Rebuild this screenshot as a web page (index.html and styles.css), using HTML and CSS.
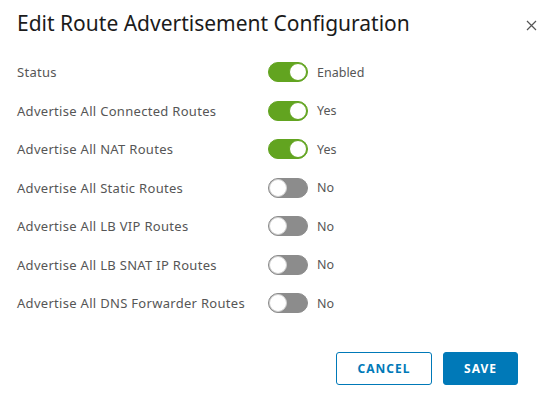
FILE: index.html
```html
<!DOCTYPE html>
<html>
<head>
<meta charset="utf-8">
<link rel="stylesheet" href="styles.css">
</head>
<body>
<div class="modal">
  <div class="header">
    <h1 class="title">Edit Route Advertisement Configuration</h1>
    <button class="close" aria-label="Close">
      <svg width="11" height="11" viewBox="0 0 11 11"><path d="M1 1L10 10M10 1L1 10" stroke="#555" stroke-width="1.2" fill="none"/></svg>
    </button>
  </div>
  <div class="rows">
    <div class="row"><span class="label">Status</span><span class="toggle on"><span class="knob"></span></span><span class="value">Enabled</span></div>
    <div class="row"><span class="label">Advertise All Connected Routes</span><span class="toggle on"><span class="knob"></span></span><span class="value">Yes</span></div>
    <div class="row"><span class="label">Advertise All NAT Routes</span><span class="toggle on"><span class="knob"></span></span><span class="value">Yes</span></div>
    <div class="row"><span class="label">Advertise All Static Routes</span><span class="toggle"><span class="knob"></span></span><span class="value">No</span></div>
    <div class="row"><span class="label">Advertise All LB VIP Routes</span><span class="toggle"><span class="knob"></span></span><span class="value">No</span></div>
    <div class="row"><span class="label">Advertise All LB SNAT IP Routes</span><span class="toggle"><span class="knob"></span></span><span class="value">No</span></div>
    <div class="row"><span class="label">Advertise All DNS Forwarder Routes</span><span class="toggle"><span class="knob"></span></span><span class="value">No</span></div>
  </div>
  <div class="footer">
    <button class="btn btn-outline">CANCEL</button>
    <button class="btn btn-primary">SAVE</button>
  </div>
</div>
</body>
</html>
```
FILE: styles.css
```css
html, body {
  margin: 0;
  padding: 0;
  background: #fff;
}
body {
  font-family: "Noto Sans", "Open Sans", sans-serif;
  color: #565656;
}
.modal {
  width: 555px;
  height: 403px;
  box-sizing: border-box;
  padding: 0 0 0 17px;
}
.header {
  display: flex;
  align-items: center;
  justify-content: space-between;
  height: 46px;
}
.title {
  margin: 0;
  font-size: 21px;
  font-weight: 400;
  color: #1b1b1b;
  line-height: 46px;
}
.close {
  border: 0;
  background: none;
  padding: 0;
  margin-right: 18px;
  width: 11px;
  height: 11px;
  display: flex;
  margin-top: 4px;
}
.rows {
  display: flex;
  flex-direction: column;
  gap: 18.5px;
  padding-top: 16px;
}
.row {
  display: flex;
  align-items: center;
  height: 20px;
  font-size: 13px;
  letter-spacing: 0.3px;
}
.label {
  width: 251px;
  color: #565656;
}
.toggle {
  box-sizing: border-box;
  width: 40px;
  height: 20px;
  border-radius: 10px;
  background: #8c8c8c;
  border: 1px solid #8c8c8c;
  display: flex;
  align-items: center;
  justify-content: flex-start;
  margin-right: 9px;
}
.toggle .knob {
  width: 18px;
  height: 18px;
  border-radius: 50%;
  background: #fff;
  box-sizing: border-box;
  border: 1px solid #cfcfcf;
}
.toggle.on {
  background: #62a420;
  border-color: #62a420;
  justify-content: flex-end;
}
.toggle.on .knob {
  border-color: #62a420;
}
.value {
  color: #565656;
  font-size: 12.5px;
  letter-spacing: 0;
}
.footer {
  display: flex;
  justify-content: flex-end;
  gap: 11px;
  padding-right: 37px;
  margin-top: 39px;
}
.btn {
  height: 33px;
  box-sizing: border-box;
  border-radius: 3px;
  font-family: "Noto Sans", sans-serif;
  font-size: 12px;
  font-weight: 700;
  letter-spacing: 1px;
  cursor: pointer;
}
.btn-outline {
  width: 96px;
  background: #fff;
  border: 1px solid #0079b8;
  color: #0079b8;
}
.btn-primary {
  width: 75px;
  background: #0079b8;
  border: 1px solid #0079b8;
  color: #fff;
}
```
